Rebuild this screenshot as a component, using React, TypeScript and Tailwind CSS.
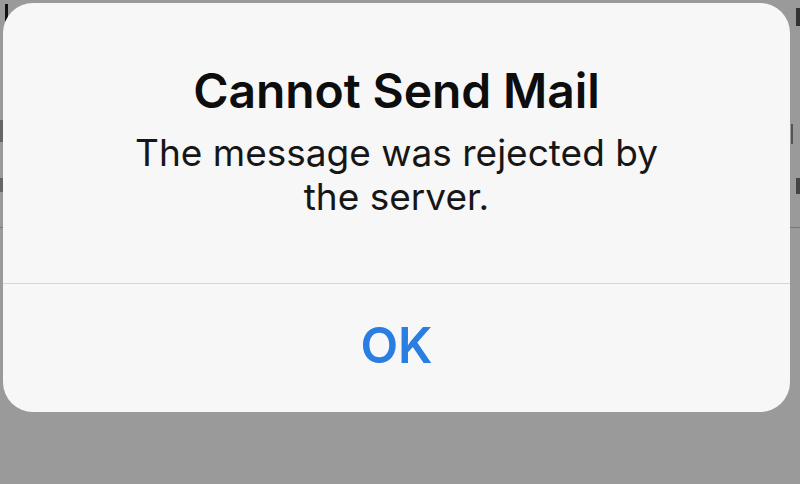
export default function App() {
  return (
    <div
      className="relative h-[484px] w-[800px] overflow-hidden bg-[#9a9a9a] pt-[3px] pl-[3px]"
      style={{ fontFamily: 'Inter, "Noto Sans", sans-serif' }}
    >
      {/* bits of the screen behind the alert */}
      <div className="absolute left-[5px] top-[4px] h-[20px] w-[3px] bg-[#111]" />
      <div className="absolute left-0 top-[120px] h-[22px] w-[3px] bg-[#666]" />
      <div className="absolute left-0 top-[178px] h-[14px] w-[3px] bg-[#666]" />
      <div className="absolute left-0 top-[227px] h-px w-[4px] bg-[#777]" />
      <div className="absolute right-0 top-[8px] h-[18px] w-[4px] bg-[#333]" />
      <div className="absolute right-[7px] top-[124px] h-[20px] w-[2px] bg-[#555]" />
      <div className="absolute right-0 top-[178px] h-[16px] w-[4px] bg-[#444]" />
      <div className="absolute right-0 top-[227px] h-px w-[10px] bg-[#777]" />

      <div className="relative flex h-[409px] w-[787px] flex-col overflow-hidden rounded-[30px] bg-[#f7f7f7]">
        <div className="flex h-[280px] flex-col items-center pt-[60px] text-center">
          <h1 className="text-[48px] leading-[56px] font-semibold tracking-[-0.1px] text-[#0d0d0d]">
            Cannot Send Mail
          </h1>
          <p className="mt-[12px] text-[37px] leading-[44px] text-[#161616]">
            The message was rejected by
            <br />
            the server.
          </p>
        </div>
        <div className="h-px bg-[#d6d6d8]" />
        <div className="flex flex-1 items-center justify-center pb-[4px]">
          <span className="text-[49px] font-semibold text-[#2a7de1]">OK</span>
        </div>
      </div>
    </div>
  );
}
